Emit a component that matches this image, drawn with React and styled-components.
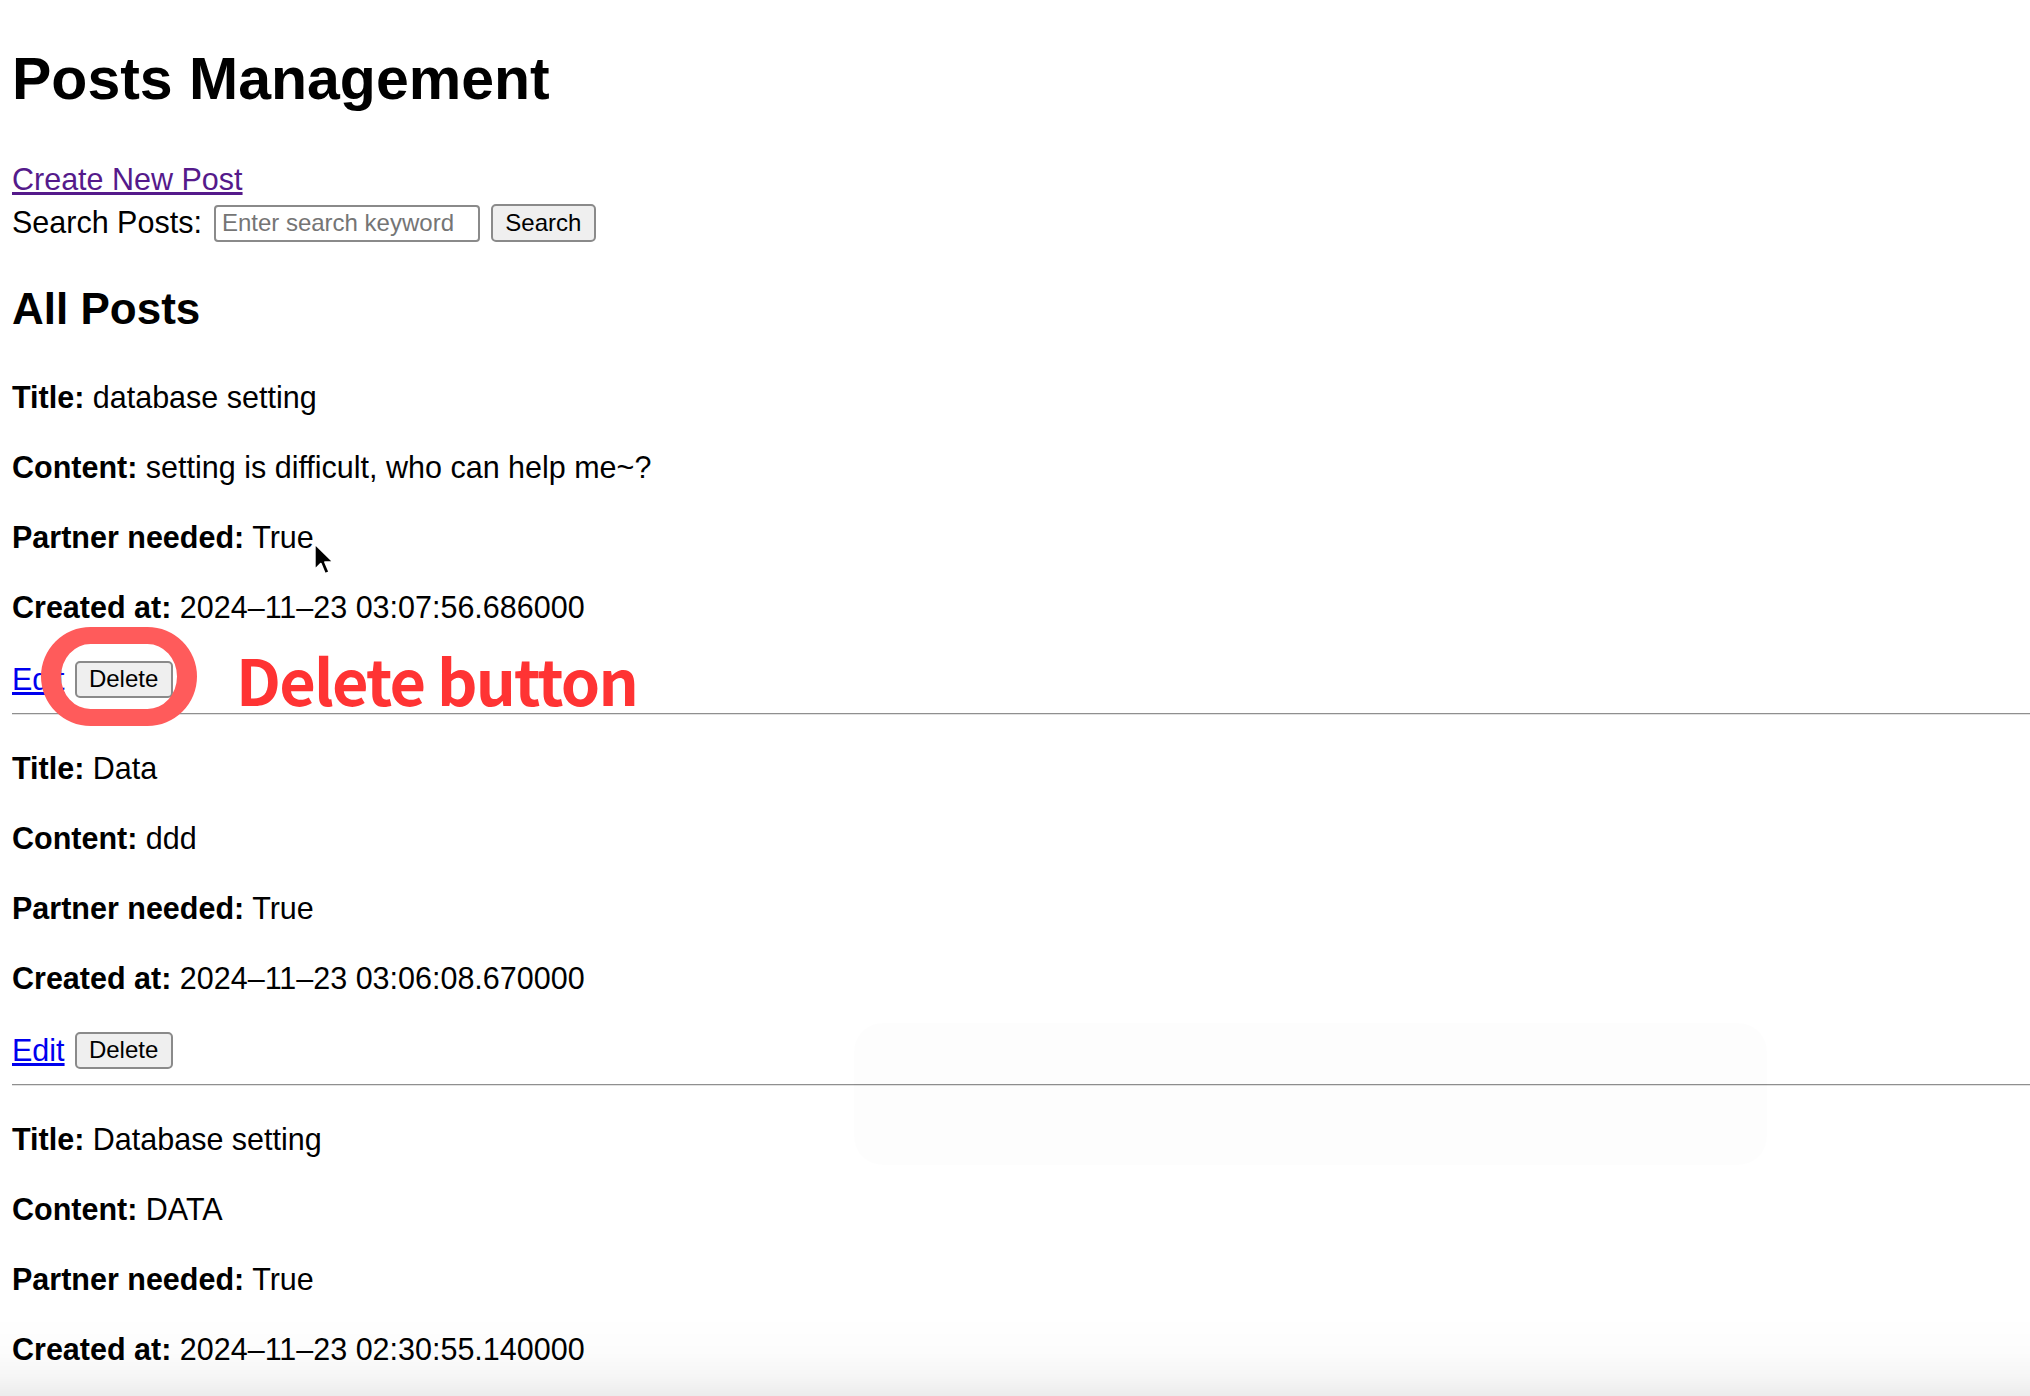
import React from "react";
import styled, { createGlobalStyle } from "styled-components";

const GlobalStyle = createGlobalStyle`
  html, body {
    margin: 0;
    padding: 0;
    background: #ffffff;
  }
  body {
    font-family: "Liberation Sans", Arial, Helvetica, sans-serif;
    color: #000;
  }
`;

const Page = styled.div`
  position: relative;
  padding: 45px 0 0 12px;
  height: 1396px;
  box-sizing: border-box;
  overflow: hidden;
`;

const Heading = styled.h1`
  margin: 0 0 48px;
  font-size: 59px;
  line-height: 69px;
  font-weight: 700;
`;

const LinkLine = styled.div`
  font-size: 30.5px;
  line-height: 34px;
`;

const CreateLink = styled.a`
  color: #551a8b;
  text-decoration: underline;
`;

const SearchRow = styled.div`
  display: flex;
  align-items: center;
  height: 38px;
  margin-top: 8px;
`;

const SearchLabel = styled.label`
  font-size: 30.5px;
  line-height: 34px;
  margin: -3px 12px 0 0;
`;

const SearchInput = styled.input`
  box-sizing: border-box;
  width: 266px;
  height: 37px;
  padding: 0 6px;
  border: 2px solid #8a8a8a;
  border-radius: 4px;
  font-family: inherit;
  font-size: 24px;
  color: #000;
  &::placeholder {
    color: #757575;
  }
`;

const NativeButton = styled.button`
  box-sizing: border-box;
  height: ${(p) => p.$h}px;
  width: ${(p) => p.$w}px;
  margin-left: ${(p) => p.$gap}px;
  padding: 0;
  border: 2px solid #8a8a8a;
  border-radius: 5px;
  background: #efefef;
  font-family: inherit;
  font-size: 24px;
  color: #000;
`;

const SectionTitle = styled.h2`
  margin: 41px 0 45px;
  font-size: 44px;
  line-height: 52px;
  font-weight: 700;
`;

const Field = styled.p`
  margin: 36px 0 0;
  font-size: 30.5px;
  line-height: 34px;
`;

const Actions = styled.div`
  display: flex;
  align-items: center;
  height: 38px;
  margin-top: 36px;
`;

const EditLink = styled.a`
  color: #0000ee;
  font-size: 30.5px;
  line-height: 34px;
  text-decoration: underline;
`;

const Rule = styled.hr`
  margin: 15px 0 0;
  height: 0;
  border: none;
  border-top: 1px solid #8f8f8f;
  border-bottom: 1px solid #e2e2e2;
`;

const Ring = styled.div`
  position: absolute;
  left: 41px;
  top: 627px;
  width: 156px;
  height: 99px;
  box-sizing: border-box;
  border-style: solid;
  border-color: #ff5b5b;
  border-width: 17px 20px;
  border-radius: 50px;
  pointer-events: none;
`;

const Note = styled.div`
  position: absolute;
  left: 236px;
  top: 647px;
  font-family: "Noto Sans CJK SC", "Noto Sans", sans-serif;
  font-weight: 700;
  font-size: 63px;
  line-height: 63px;
  letter-spacing: -1.8px;
  color: #ff3333;
  white-space: nowrap;
`;

const Cursor = styled.svg`
  position: absolute;
  left: 313px;
  top: 542px;
`;

const PlayerGhost = styled.div`
  position: absolute;
  left: 854px;
  top: 1023px;
  width: 913px;
  height: 142px;
  border-radius: 28px;
  background: rgba(0, 0, 0, 0.009);
`;

const BottomShade = styled.div`
  position: fixed;
  left: 0;
  right: 0;
  bottom: 0;
  height: 80px;
  pointer-events: none;
  background: linear-gradient(
    to bottom,
    rgba(0, 0, 0, 0) 0%,
    rgba(0, 0, 0, 0.012) 45%,
    rgba(0, 0, 0, 0.035) 75%,
    rgba(0, 0, 0, 0.075) 100%
  );
`;

const posts = [
  {
    id: 1,
    title: "database setting",
    content: "setting is difficult, who can help me~?",
    partner: "True",
    created: "2024–11–23 03:07:56.686000",
  },
  {
    id: 2,
    title: "Data",
    content: "ddd",
    partner: "True",
    created: "2024–11–23 03:06:08.670000",
  },
  {
    id: 3,
    title: "Database setting",
    content: "DATA",
    partner: "True",
    created: "2024–11–23 02:30:55.140000",
  },
];

const App = () => {
  return (
    <Page>
      <GlobalStyle />
      <Heading>Posts Management</Heading>
      <LinkLine>
        <CreateLink href="#">Create New Post</CreateLink>
      </LinkLine>
      <SearchRow>
        <SearchLabel>Search Posts:</SearchLabel>
        <SearchInput placeholder="Enter search keyword" />
        <NativeButton $w={105} $h={38} $gap={11}>
          Search
        </NativeButton>
      </SearchRow>

      <SectionTitle>All Posts</SectionTitle>
      {posts.map((post) => (
        <div key={post.id}>
          <Field>
            <strong>Title:</strong> {post.title}
          </Field>
          <Field>
            <strong>Content:</strong> {post.content}
          </Field>
          <Field>
            <strong>Partner needed:</strong> {post.partner}
          </Field>
          <Field>
            <strong>Created at:</strong> {post.created}
          </Field>
          <Actions>
            <EditLink href="#">Edit</EditLink>
            <NativeButton $w={98} $h={37} $gap={10}>
              Delete
            </NativeButton>
          </Actions>
          <Rule />
        </div>
      ))}

      {/* annotation layer from the screenshot */}
      <Ring />
      <Note>Delete button</Note>
      <Cursor width="24" height="36" viewBox="0 0 20 30">
        <path
          d="M1.5 1.5 L1.5 23 L6.5 18 L10 26.5 L13.5 25 L10 16.8 L17 16.8 Z"
          fill="#000"
          stroke="#fff"
          strokeWidth="1.5"
          strokeLinejoin="round"
        />
      </Cursor>
      <PlayerGhost />
      <BottomShade />
    </Page>
  );
};

export default App;
